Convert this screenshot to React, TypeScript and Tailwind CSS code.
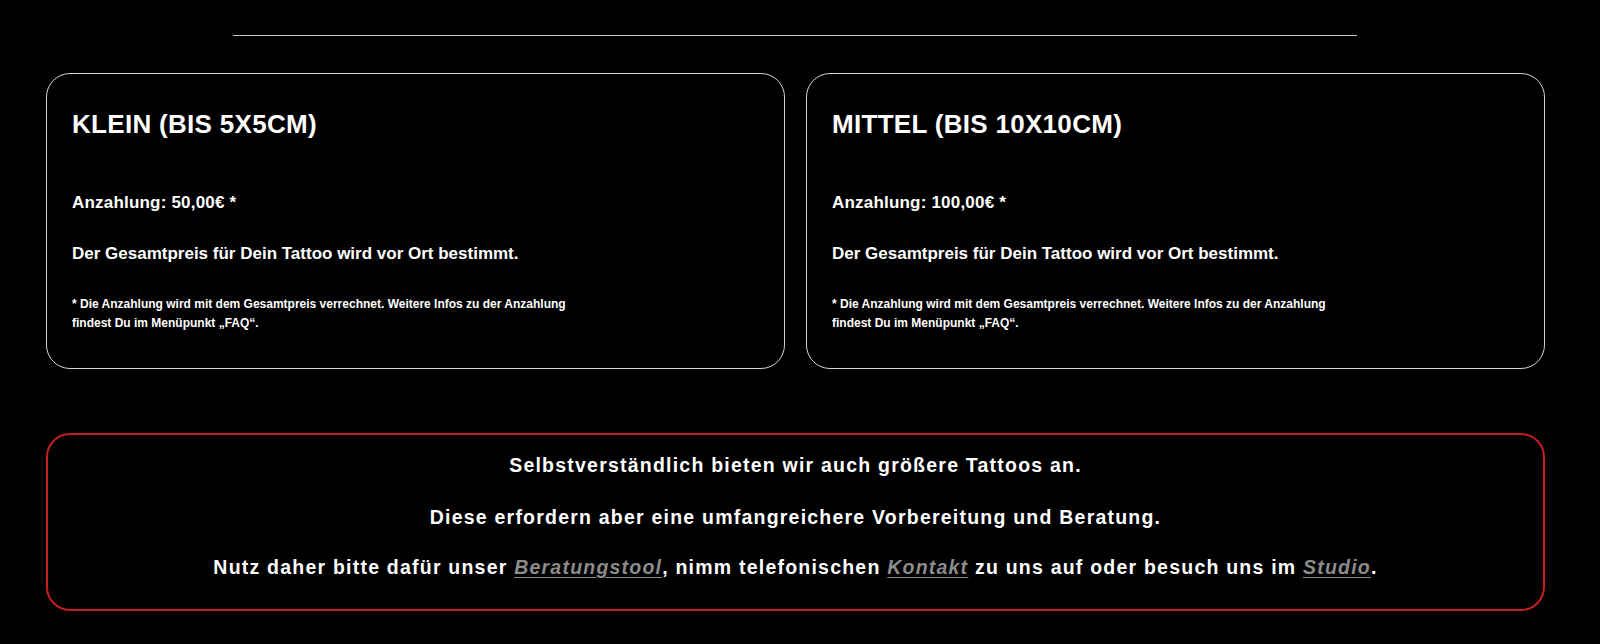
import React from "react";

const font = { fontFamily: '"Liberation Sans", Arial, Helvetica, sans-serif' };

type Tier = { title: string; deposit: string };

const tiers: Tier[] = [
  { title: "KLEIN (BIS 5X5CM)", deposit: "Anzahlung: 50,00€ *" },
  { title: "MITTEL (BIS 10X10CM)", deposit: "Anzahlung: 100,00€ *" },
];

function PriceCard({ tier }: { tier: Tier }) {
  return (
    <div className="flex-1 h-[296px] rounded-[24px] border border-[#d4d4d4] pl-[25px] pr-6 pt-[35px]">
      <h3 className="text-[26px] leading-[30px] font-bold tracking-[0.3px] text-white">{tier.title}</h3>
      <p className="mt-[54px] text-[17px] leading-[20px] font-bold tracking-[0.2px] text-white">{tier.deposit}</p>
      <p className="mt-[31px] text-[17px] leading-[20px] font-bold text-white">
        Der Gesamtpreis für Dein Tattoo wird vor Ort bestimmt.
      </p>
      <p className="mt-[31px] text-[12px] leading-[18.6px] font-bold text-white">
        * Die Anzahlung wird mit dem Gesamtpreis verrechnet. Weitere Infos zu der Anzahlung
        <br />
        findest Du im Menüpunkt „FAQ“.
      </p>
    </div>
  );
}

function InlineLink({ children }: { children: React.ReactNode }) {
  return (
    <a href="#" className="italic text-[#8c8c8c] underline decoration-[#8c8c8c] underline-offset-[3px]">
      {children}
    </a>
  );
}

export default function App() {
  return (
    <div className="min-h-[644px] w-full bg-black text-white" style={font}>
      <div className="pl-[46px] pr-[55px]">
        <div className="pt-[35px]">
          <div className="ml-[187px] h-px w-[1124px] bg-[#c4c4c4]" />
        </div>

        <div className="mt-[37px] flex gap-[21px]">
          {tiers.map((t) => (
            <PriceCard key={t.title} tier={t} />
          ))}
        </div>

        <div className="mt-[64px] h-[178px] rounded-[24px] border-2 border-[#c81e1e] pt-[19px] text-center text-[19.5px] leading-[22px] font-bold tracking-[1.22px] text-white">
          <p>Selbstverständlich bieten wir auch größere Tattoos an.</p>
          <p className="mt-[30px]">Diese erfordern aber eine umfangreichere Vorbereitung und Beratung.</p>
          <p className="mt-[28px]">
            Nutz daher bitte dafür unser <InlineLink>Beratungstool</InlineLink>, nimm telefonischen{" "}
            <InlineLink>Kontakt</InlineLink> zu uns auf oder besuch uns im <InlineLink>Studio</InlineLink>.
          </p>
        </div>
      </div>
    </div>
  );
}
